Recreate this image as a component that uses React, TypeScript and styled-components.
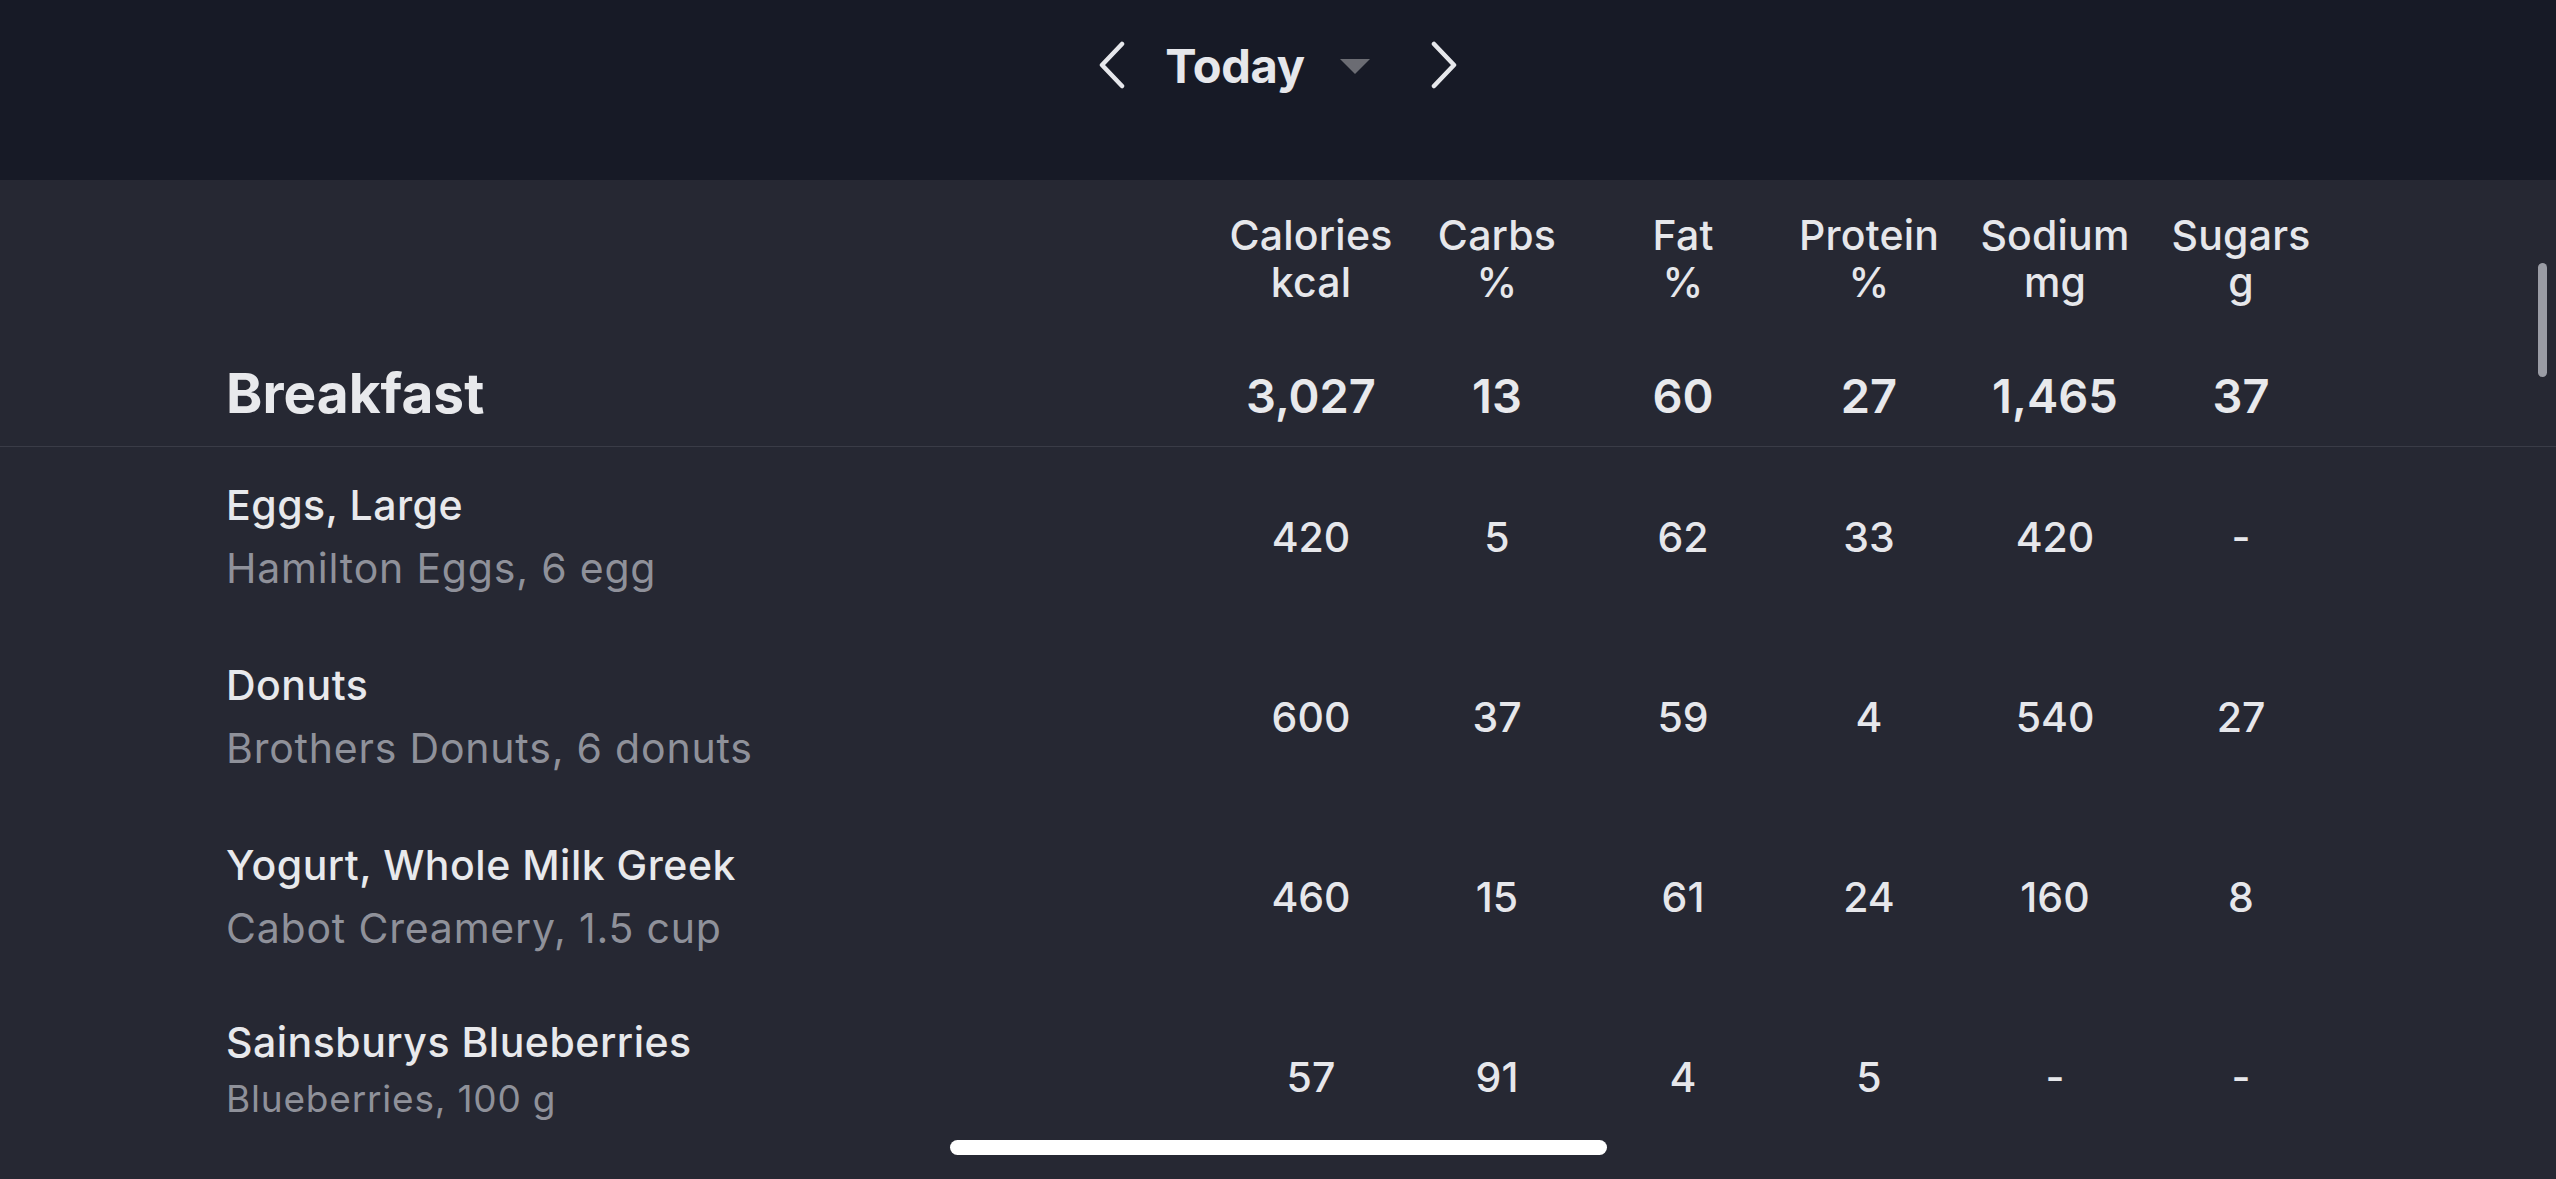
import React from 'react'
import styled, {createGlobalStyle} from 'styled-components'

const GlobalStyle = createGlobalStyle`
  html, body {
    margin: 0;
    padding: 0;
    background: #262833;
    overflow: hidden;
  }
  body {
    font-family: Inter, "Noto Sans", "Liberation Sans", sans-serif;
    color: #e6e7eb;
    -webkit-font-smoothing: antialiased;
  }
`

const Screen = styled.div`
  position: relative;
  width: 2556px;
  height: 1179px;
  background: #262833;
  overflow: hidden;
`

const TopBar = styled.header`
  height: 180px;
  background: #171a26;
  display: flex;
  justify-content: center;
  align-items: flex-start;
  padding-top: 40px;
  box-sizing: border-box;
`

const DayNav = styled.div`
  display: flex;
  align-items: center;
  height: 50px;
`

const NavArrow = styled.button<{side: 'left' | 'right'; gap: number}>`
  background: none;
  border: 0;
  padding: 0;
  margin: 0;
  ${({side, gap}) => side === 'left' ? `margin-right: ${gap}px;` : `margin-left: ${gap}px;`}
  display: flex;
  align-items: center;
  cursor: pointer;
`

const DayTitle = styled.span`
  font-size: 47px;
  font-weight: 700;
  color: #e6e7eb;
  letter-spacing: -0.3px;
`

const Caret = styled.span`
  width: 0;
  height: 0;
  margin-left: 35px;
  margin-top: 2px;
  border-left: 15px solid transparent;
  border-right: 15px solid transparent;
  border-top: 15px solid #6b6c73;
`

const TableGrid = styled.div<{height?: number}>`
  display: grid;
  grid-template-columns: 1fr repeat(6, 186px);
  padding: 0 222px 0 226px;
  ${({height}) => height ? `height: ${height}px;` : ''}
  box-sizing: border-box;
`

const HeadRow = styled(TableGrid)`
  padding-top: 32px;
`

const HeadCell = styled.div`
  font-size: 41px;
  font-weight: 500;
  line-height: 47px;
  letter-spacing: 0.2px;
  text-align: center;
  color: #e6e7eb;
  white-space: nowrap;
`

const MealRow = styled(TableGrid)`
  align-items: baseline;
  padding-top: 54px;
  padding-bottom: 17px;
  border-bottom: 1px solid #3a3c47;
`

const MealTitle = styled.div`
  font-size: 55px;
  font-weight: 700;
  line-height: 66px;
  color: #e8e9ec;
`

const MealTotal = styled.div`
  font-size: 47px;
  font-weight: 600;
  line-height: 66px;
  text-align: center;
  color: #e8e9ec;
`

const FoodRow = styled(TableGrid)`
  align-items: center;
`

const FoodInfo = styled.div`
  display: flex;
  flex-direction: column;
`

const FoodName = styled.div`
  font-size: 41px;
  font-weight: 500;
  line-height: 63px;
  letter-spacing: 0.5px;
  color: #e8e9ec;
`

const FoodDetail = styled.div<{compact?: boolean}>`
  font-size: ${({compact}) => compact ? 37 : 41}px;
  line-height: ${({compact}) => compact ? 50 : 63}px;
  margin-bottom: ${({compact}) => compact ? 20 : 0}px;
  letter-spacing: 0.8px;
  font-weight: 400;
  color: #8f919a;
`

const Value = styled.div`
  font-size: 41px;
  font-weight: 500;
  text-align: center;
  color: #e6e7eb;
`

const ScrollThumb = styled.div`
  position: absolute;
  left: 2538px;
  top: 263px;
  width: 9px;
  height: 114px;
  border-radius: 5px;
  background: #9a9ca5;
`

const HomeIndicator = styled.div`
  position: absolute;
  left: 950px;
  top: 1140px;
  width: 657px;
  height: 15px;
  border-radius: 8px;
  background: #ffffff;
`

const Chevron = ({dir}: {dir: 'left' | 'right'}) => (
  <svg width="30" height="48" viewBox="0 0 30 48" fill="none">
    <path
      d={dir === 'left' ? 'M25 3 L5 24 L25 45' : 'M5 3 L25 24 L5 45'}
      stroke="#e6e7eb"
      strokeWidth="4.5"
      strokeLinecap="round"
      strokeLinejoin="round"
    />
  </svg>
)

const columns = [
  ['Calories', 'kcal'],
  ['Carbs', '%'],
  ['Fat', '%'],
  ['Protein', '%'],
  ['Sodium', 'mg'],
  ['Sugars', 'g'],
]

const totals = ['3,027', '13', '60', '27', '1,465', '37']

const foods = [
  {name: 'Eggs, Large', detail: 'Hamilton Eggs, 6 egg', values: ['420', '5', '62', '33', '420', '-']},
  {name: 'Donuts', detail: 'Brothers Donuts, 6 donuts', values: ['600', '37', '59', '4', '540', '27']},
  {name: 'Yogurt, Whole Milk Greek', detail: 'Cabot Creamery, 1.5 cup', values: ['460', '15', '61', '24', '160', '8']},
  {name: 'Sainsburys Blueberries', detail: 'Blueberries, 100 g', values: ['57', '91', '4', '5', '-', '-'], compact: true},
]

const App: React.FC = () => {
  return (
    <Screen>
      <GlobalStyle/>
      <TopBar>
        <DayNav>
          <NavArrow side="left" gap={38}>
            <Chevron dir="left"/>
          </NavArrow>
          <DayTitle>Today</DayTitle>
          <Caret/>
          <NavArrow side="right" gap={59}>
            <Chevron dir="right"/>
          </NavArrow>
        </DayNav>
      </TopBar>

      <HeadRow>
        <div/>
        {columns.map(([label, unit]) => (
          <HeadCell key={label}>{label}<br/>{unit}</HeadCell>
        ))}
      </HeadRow>

      <MealRow>
        <MealTitle>Breakfast</MealTitle>
        {totals.map((t, i) => <MealTotal key={i}>{t}</MealTotal>)}
      </MealRow>

      {foods.map(food => (
        <FoodRow key={food.name} height={180}>
          <FoodInfo>
            <FoodName>{food.name}</FoodName>
            <FoodDetail compact={food.compact}>{food.detail}</FoodDetail>
          </FoodInfo>
          {food.values.map((v, i) => <Value key={i}>{v}</Value>)}
        </FoodRow>
      ))}

      <ScrollThumb/>
      <HomeIndicator/>
    </Screen>
  )
}

export default App
